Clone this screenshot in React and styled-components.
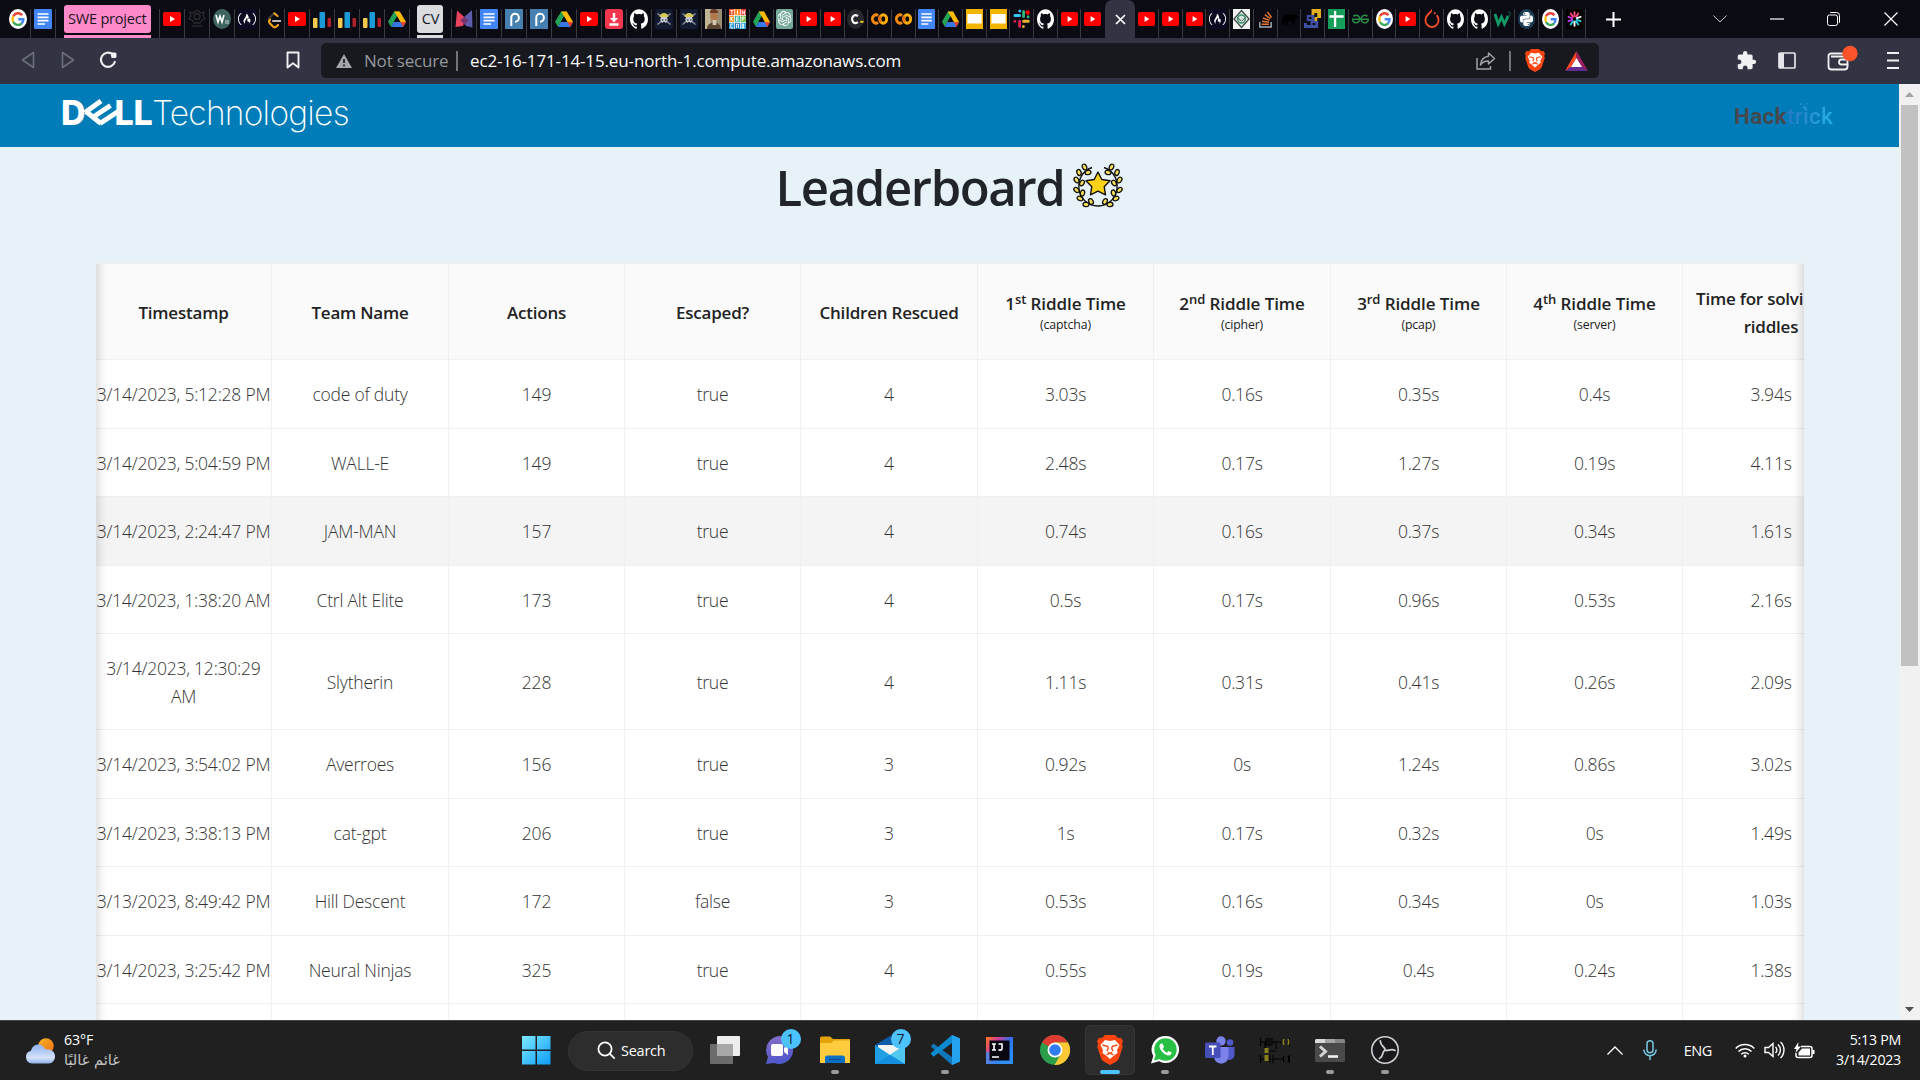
import React from "react";
import styled, { createGlobalStyle, css } from "styled-components";
import {
  SiGithub,
  SiGeeksforgeeks,
  SiPython,
  SiPytorch,
  SiOpenai,
  SiFreecodecamp,
} from "react-icons/si";
import { MdExtension } from "react-icons/md";

const Global = createGlobalStyle`
  * { box-sizing: border-box; }
  html, body { margin: 0; padding: 0; overflow: hidden; background: #e6f2f7; }
  body { font-family: "Open Sans", "Noto Sans", "DejaVu Sans", sans-serif; }
  svg { display: block; flex: none; }
`;

const Screen = styled.div`
  width: 1920px;
  height: 1080px;
  display: flex;
  flex-direction: column;
  overflow: hidden;
`;

/* ---------- browser tab strip ---------- */

const TabStrip = styled.div`
  height: 38px;
  background: #0b0b14;
  display: flex;
  padding-left: 6px;
`;

const Tab = styled.div`
  width: ${(p) => p.$w}px;
  height: 29px;
  margin-top: 9px;
  flex: none;
  border-right: 1px solid ${(p) => (p.$last ? "transparent" : "#3a3b40")};
  display: flex;
  justify-content: center;
`;

const GroupSlot = styled.div`
  width: ${(p) => p.$w}px;
  flex: none;
  height: 29px;
  margin-top: 9px;
  display: flex;
  flex-direction: column;
  align-items: center;
  border-right: 1px solid #3a3b40;
`;

const GroupChip = styled.div`
  margin-top: -4px;
  width: ${(p) => p.$w}px;
  height: 28px;
  flex: none;
  border-radius: 3px;
  background: ${(p) => p.$color};
  color: #17181f;
  font-size: 14.6px;
  letter-spacing: -0.25px;
  line-height: 27px;
  text-align: center;
  white-space: nowrap;
`;

const GroupLine = styled.div`
  margin-top: 2px;
  width: ${(p) => p.$w}px;
  height: 3px;
  flex: none;
  background: ${(p) => p.$color};
`;

const ActiveTab = styled.div`
  width: 30px;
  height: 38px;
  flex: none;
  background: #323443;
  border-radius: 7px 7px 0 0;
  display: flex;
  align-items: center;
  justify-content: center;
`;

const NewTab = styled.div`
  width: 54px;
  display: flex;
  align-items: center;
  justify-content: center;
`;

const WindowButtons = styled.div`
  margin-left: auto;
  display: flex;
`;

const WindowButton = styled.div`
  width: ${(p) => p.$w || 57}px;
  display: flex;
  align-items: center;
  justify-content: center;
`;

/* ---------- browser toolbar ---------- */

const Toolbar = styled.div`
  height: 46px;
  background: #323443;
  display: flex;
  align-items: center;
`;

const NavButtons = styled.div`
  width: 321px;
  display: flex;
  align-items: center;
  padding: 0 21px 3px 21px;

  svg:nth-child(2) { margin-left: 26px; }
  svg:nth-child(3) { margin-left: 24px; }
  svg:nth-child(4) { margin-left: auto; }
`;

const AddressBar = styled.div`
  width: 1278px;
  height: 35px;
  margin-top: -1px;
  border-radius: 5px;
  background: #17191f;
  display: flex;
  align-items: center;
  padding: 0 11px 0 15px;
  font-size: 17px;
`;

const NotSecure = styled.span`
  margin-left: 12px;
  width: 92px;
  color: #96979b;
  letter-spacing: -0.18px;
  white-space: nowrap;
`;

const Divider = styled.span`
  width: 2px;
  height: 20px;
  background: #73747a;
`;

const Url = styled.span`
  margin-left: 12px;
  color: #fbfbfb;
  white-space: nowrap;
  letter-spacing: -0.14px;
`;

const AddressActions = styled.div`
  margin-left: auto;
  display: flex;
  align-items: center;

  ${Divider} { margin: 0 14px 0 13px; }
  svg:last-child { margin-left: 20px; }
`;

const ToolbarActions = styled.div`
  flex: 1;
  display: flex;
  align-items: center;
  justify-content: flex-end;
  padding-right: 21px;
  padding-bottom: 2px;

  svg:nth-child(2) { margin-left: 21px; }
  svg:nth-child(3) { margin: -4px 0 0 31px; }
  svg:nth-child(4) { margin-left: 29px; }
`;

/* ---------- page ---------- */

const Viewport = styled.div`
  height: 936px;
  display: flex;
  overflow: hidden;
`;

const Page = styled.main`
  width: 1899px;
  height: 936px;
  background: #e6f2f7;
  display: flex;
  flex-direction: column;
  overflow: hidden;
`;

const SiteHeader = styled.header`
  height: 63px;
  flex: none;
  background: #007db8;
  display: flex;
  align-items: center;
  justify-content: space-between;
  padding: 0 65px 0 61px;
`;

const DellLogo = styled.div`
  display: flex;
  align-items: center;
  height: 63px;
  color: #fff;
  white-space: nowrap;
  font-family: Inter, "Liberation Sans", sans-serif;
`;

const DellBold = styled.span`
  font-weight: 800;
  font-size: 34px;
  line-height: 40px;
  margin-top: -6px;
  letter-spacing: ${(p) => p.$ls || "0"};
`;

const SlantedE = styled.svg`
  margin: -5px -3px 0 -3px;
`;

const Technologies = styled.span`
  font-weight: 250;
  font-size: 33.5px;
  line-height: 40px;
  margin-top: -6px;
  letter-spacing: -0.75px;
`;

const HacktrickLogo = styled.div`
  position: relative;
  font-family: Roboto, "Open Sans", sans-serif;
  font-weight: 700;
  font-size: 22.5px;
  line-height: 26px;
  letter-spacing: 0.3px;
  color: #46484d;
  display: flex;
  width: 100px;
  white-space: nowrap;
`;

const Trick = styled.span`
  font-weight: 500;
  background: linear-gradient(90deg, #2478c6, #2a8fd4 50%, #22b4e2);
  background-clip: text;
  -webkit-background-clip: text;
  color: transparent;
`;

const Sparkle = styled.svg`
  position: absolute;
  left: 66px;
  top: 0;
`;

const TitleRow = styled.div`
  height: 116px;
  flex: none;
  display: flex;
  justify-content: center;
  padding-top: 6px;
`;

const Title = styled.h1`
  margin: 0;
  font-size: 49px;
  line-height: 69px;
  font-weight: 560;
  letter-spacing: -1.35px;
  color: #212529;
  margin-right: 9px;
`;

const LaurelBox = styled.div`
  padding-top: 10px;
`;

const TableFrame = styled.section`
  position: relative;
  width: 1708px;
  flex: 1;
  margin-left: 96px;
  overflow: hidden;
  border-top: 1px solid #f0f0f0;
  background: #fff;

  &::before,
  &::after {
    content: "";
    position: absolute;
    top: 0;
    bottom: 0;
    width: 30px;
    pointer-events: none;
  }
  &::before { left: 0; box-shadow: inset 12px 0 10px -9px rgba(0, 0, 0, 0.15); }
  &::after { right: 0; box-shadow: inset -12px 0 10px -9px rgba(0, 0, 0, 0.15); }
`;

const Row = styled.div`
  display: grid;
  grid-template-columns: 176px 177px 176px 176px 177px 176px 177px 176px 176px 177px;
  height: ${(p) => p.$h}px;
  background: ${(p) => (p.$head ? "#fafafa" : p.$hover ? "#f4f4f4" : "#fff")};
`;

const Cell = styled.div`
  border-right: 1px solid #f0f0f0;
  border-bottom: 1px solid #f0f0f0;
  display: flex;
  flex-direction: column;
  align-items: center;
  justify-content: center;
  text-align: center;
  overflow: hidden;
  font-size: 17.5px;
  line-height: 27.5px;
  white-space: pre;
  padding-top: 2px;
  ${(p) =>
    p.$head
      ? css`
          font-size: 17px;
          font-weight: 540;
          color: #222;
          letter-spacing: -0.22px;
        `
      : css`
          font-weight: 300;
          color: #333;
          letter-spacing: -0.22px;
        `}
`;

const RiddleName = styled.div`
  line-height: 23px;
  letter-spacing: -0.08px;
  sup {
    font-size: 13px;
    line-height: 0;
    vertical-align: 6px;
  }
`;

const RiddleKind = styled.div`
  font-size: 12.3px;
  font-weight: 500;
  line-height: 19px;
  letter-spacing: -0.15px;
`;

const ScrollBar = styled.div`
  width: 21px;
  background: #f1f1f1;
  display: flex;
  flex-direction: column;
  align-items: center;
  justify-content: space-between;
`;

const ScrollTop = styled.div`
  display: flex;
  flex-direction: column;
  align-items: center;
`;

const ScrollArrow = styled.div`
  height: 21px;
  display: flex;
  align-items: center;
`;

const ScrollThumb = styled.div`
  width: 17px;
  height: 561px;
  background: #c1c1c1;
`;

/* ---------- taskbar ---------- */

const Taskbar = styled.footer`
  height: 60px;
  background: #202020;
  border-top: 1px solid #454545;
  display: flex;
  color: #fff;
`;

const Weather = styled.div`
  width: 508px;
  display: flex;
  align-items: center;
  padding-left: 25px;
`;

const WeatherText = styled.div`
  margin-left: 9px;
  font-size: 14.2px;
  letter-spacing: -0.1px;
  line-height: 20px;
  padding-bottom: 1px;
`;

const Condition = styled.div`
  color: #c3c3c3;
  font-family: "DejaVu Sans", sans-serif;
  font-size: 14.6px;
  letter-spacing: 0;
  white-space: nowrap;
`;

const Apps = styled.div`
  width: 904px;
  display: flex;
  align-items: center;
`;

const AppSlot = styled.div`
  width: 55px;
  height: 59px;
  flex: none;
  display: flex;
  flex-direction: column;
  align-items: center;
  padding-top: 4px;
`;

const AppTile = styled.div`
  position: relative;
  width: 50px;
  height: 50px;
  border-radius: 5px;
  background: ${(p) => (p.$active ? "#2d2d2d" : "transparent")};
  border: 1px solid ${(p) => (p.$active ? "#353535" : "transparent")};
  display: flex;
  align-items: center;
  justify-content: center;
`;

const RunMark = styled.span`
  position: absolute;
  bottom: 0;
  left: 50%;
  transform: translateX(-50%);
  width: ${(p) => (p.$active ? 20 : 8)}px;
  height: 4px;
  border-radius: 2px;
  background: ${(p) => (p.$active ? "#4cc2ff" : "#9a9a9a")};
`;

const Badge = styled.span`
  position: absolute;
  top: 3px;
  left: 25px;
  width: 20px;
  height: 20px;
  border-radius: 50%;
  background: #4cc2ff;
  color: #10202a;
  font-size: 14px;
  line-height: 20px;
  text-align: center;
`;

const SearchPill = styled.div`
  width: 125px;
  height: 40px;
  margin: 0 4px 0 5px;
  border-radius: 20px;
  background: #2d2d2d;
  border: 1px solid #353535;
  display: flex;
  align-items: center;
  padding-left: 28px;
  font-size: 14.5px;
  letter-spacing: -0.25px;
  svg { margin-right: 5px; }
`;

const Tray = styled.div`
  flex: 1;
  display: flex;
  align-items: center;
  justify-content: flex-end;
  padding-right: 19px;
`;

const TrayItem = styled.div`
  margin-right: ${(p) => p.$gap}px;
  font-size: 14.5px;
  letter-spacing: -0.4px;
  padding-bottom: 1px;
`;

const Clock = styled.div`
  font-size: 14.2px;
  line-height: 20px;
  letter-spacing: -0.25px;
  text-align: right;
  width: 66px;
  white-space: nowrap;
  padding-bottom: 2px;
`;

/* ---------- favicons (18x20 drawing area) ---------- */

const Fav = ({ children, w = 18 }) => (
  <svg width={w} height="20" viewBox="0 0 18 20" preserveAspectRatio="none">
    {children}
  </svg>
);

const favicons = {
  google: () => (
    <>
      <ellipse cx="9" cy="10" rx="9" ry="10" fill="#fff" />
      <path d="M13.2 6.2A5.6 6 0 0 0 4.2 7.2" fill="none" stroke="#ea4335" strokeWidth="2.4" />
      <path d="M4.2 7.2a6.4 6.4 0 0 0 0 5.8" fill="none" stroke="#fbbc05" strokeWidth="2.4" />
      <path d="M4.2 13a5.6 6 0 0 0 8.6 1.3" fill="none" stroke="#34a853" strokeWidth="2.4" />
      <path d="M9.2 10.2h5.2a6 6 0 0 1-1.8 4.2" fill="none" stroke="#4285f4" strokeWidth="2.4" />
    </>
  ),
  docs: () => (
    <>
      <rect width="18" height="20" rx="1" fill="#4285f4" />
      <path d="M3.5 5h11M3.5 8.3h11M3.5 11.6h11M3.5 15h7.5" stroke="#fff" strokeWidth="1.7" />
    </>
  ),
  youtube: () => (
    <>
      <rect y="3" width="18" height="14" rx="2" fill="#f00" />
      <path d="M7 7l5 3-5 3z" fill="#fff" />
    </>
  ),
  crest: () => (
    <g fill="none" stroke="#2b2b30" strokeWidth="1.3">
      <path d="M9 1l4 3 3-1-1 4 2 3-3 1-2 3H6l-2-3-3-1 2-3-1-4 3 1z" />
      <circle cx="9" cy="7.5" r="3" />
      <path d="M4 17h10" />
    </g>
  ),
  wu: () => (
    <>
      <ellipse cx="9" cy="10" rx="9" ry="10" fill="#3f6460" />
      <path d="M3 6l2 7 2-6 2 6 2-7" fill="none" stroke="#fff" strokeWidth="1.6" />
      <path d="M12 12h4M12 14h4" stroke="#c5d3d1" />
    </>
  ),
  fcc: () => (
    <>
      <rect width="18" height="20" fill="#0a0a23" />
      <svg x="0" y="1" width="18" height="18"><SiFreecodecamp size={18} color="#fff" /></svg>
    </>
  ),
  leet: () => (
    <g fill="none" strokeWidth="2.2" strokeLinecap="round" strokeLinejoin="round">
      <path d="M13 5.5L11 4 6 9.5" stroke="#3a3a3a" />
      <path d="M14.5 7L11.5 4.5M7 10.5a3 3 0 0 0 0 4l3 3a2.6 2.6 0 0 0 3.5 0l1.5-1.5" stroke="#f5a11f" />
      <path d="M10 12h8" stroke="#b9b9b9" />
    </g>
  ),
  bars: () => (
    <>
      <rect y="9" width="4.5" height="10" rx="1" fill="#f4c94c" />
      <rect x="6.5" y="3" width="5.5" height="16" rx="1" fill="#1a9ad6" />
      <rect x="14.5" y="9" width="3.5" height="9" rx="1" fill="#b3202c" />
    </>
  ),
  drive: () => (
    <>
      <path d="M6.2 2.5h5.6L5 14.7 3.2 18 0 12.8z" fill="#23a455" />
      <path d="M6.2 2.5h5.6L18 13h-5.6z" fill="#ffba00" />
      <path d="M5.9 13H18l-3 5H3.1z" fill="#3777e3" />
      <path d="M12.4 13H18l-2.9 5z" fill="#ea4335" />
      <path d="M9 7.5l3.3 5.5H5.8z" fill="#0b0b14" />
    </>
  ),
  em: () => (
    <>
      <path d="M2 1.5l9 8-3 7.5-7.5 1z" fill="#e8425f" />
      <path d="M17 1L7 10l4 7 6.5 1.5z" fill="#5c5cab" />
      <path d="M5.5 11l4-3 4 3-4 5z" fill="#743470" />
    </>
  ),
  pdash: () => (
    <>
      <rect width="18" height="20" fill="#4580b0" />
      <path d="M6.3 17V8.5A3.8 4 0 1 1 10 12.7" fill="none" stroke="#fff" strokeWidth="2" />
    </>
  ),
  download: () => (
    <>
      <rect width="18" height="20" rx="3" fill="#f2384e" />
      <path d="M9 4v7M4.5 15.5h9" stroke="#fff" strokeWidth="2.4" />
      <path d="M5 9h8l-4 4.5z" fill="#fff" />
    </>
  ),
  github: () => (
    <g transform="scale(1.125 1.25)"><SiGithub size={16} color="#fff" /></g>
  ),
  skull: () => (
    <>
      <rect width="18" height="20" rx="2" fill="#131b30" />
      <path d="M2.5 4.5l13 11M15.5 4.5l-13 11" stroke="#8f95a6" strokeWidth="1.3" />
      <circle cx="9" cy="10.5" r="3.6" fill="#c9ccd6" />
      <path d="M4.5 8a4.5 4 0 0 1 9 0z" fill="#d5c855" />
      <path d="M7 11h1.5M10 11h1.5M8 13.5h2" stroke="#131b30" strokeWidth="1.2" />
    </>
  ),
  portrait: () => (
    <>
      <rect width="18" height="20" fill="#9b8d74" />
      <path d="M0 0h6v20H0z" fill="#c2b594" />
      <ellipse cx="9.5" cy="7" rx="4" ry="5.5" fill="#b27b4e" />
      <path d="M5 4a4.5 4 0 0 1 9 0z" fill="#6d3b2a" />
      <path d="M2 20c0-8 14-9 15 0z" fill="#5d4534" />
      <path d="M8 11h4v5H8z" fill="#d3c8ad" />
    </>
  ),
  tinker: () => (
    <>
      <rect width="18" height="20" fill="#fff" />
      {[
        ["#ec4f2c", "#f58a2c", "#e8352c"],
        ["#f2a033", "#35b4a0", "#6fbd45"],
        ["#2b9bd8", "#2477bd", "#2ba4df"],
      ].map((r, j) =>
        r.map((c, i) => <rect key={`${i}${j}`} x={i * 6.2} y={j * 6.9} width="5.5" height="6.2" fill={c} />)
      )}
      <path d="M1.5 1.5h3M3 1.5v4M9 1.5v4M14 5.5v-4l2.5 4v-4M2 8v4M4 8l-2 2 2 2M8 8h2.5M8 10h2.5M8 12h2.5M8 8v4M14 12V8h2v2h-2M4.5 15H2v4h2.5M8 19v-4h2v4M14 15v4h1.5v-4z" fill="none" stroke="#fff" strokeWidth=".9" />
    </>
  ),
  gpt: () => (
    <>
      <rect width="18" height="20" rx="2" fill="#75a99c" />
      <svg x="1.5" y="2" width="16" height="16"><SiOpenai size={15} color="#fff" /></svg>
    </>
  ),
  cdot: () => (
    <>
      <ellipse cx="9" cy="10" rx="9" ry="10" fill="#26282d" />
      <path d="M11.5 7.2A3.6 4 0 1 0 11.5 13" fill="none" stroke="#fff" strokeWidth="2.2" />
      <path d="M14 12.8h3.5" stroke="#e8c61d" strokeWidth="2" />
    </>
  ),
  colab: () => (
    <g fill="none" strokeWidth="3">
      <path d="M7.5 6.5A3.8 4.2 0 1 0 7.5 13.5" stroke="#f08a0c" />
      <ellipse cx="13" cy="10" rx="3.6" ry="4.2" stroke="#f9ab00" />
      <path d="M10.2 7a4 4 0 0 0 0 6" stroke="#e8710a" />
    </g>
  ),
  slides: () => (
    <>
      <rect width="18" height="20" fill="#f4b400" />
      <rect x="1.5" y="5" width="15" height="9.5" fill="#fff" />
    </>
  ),
  slack: () => (
    <g strokeWidth="3" strokeLinecap="round">
      <path d="M2 6.5h5M7.2 2v0" stroke="#36c5f0" />
      <path d="M11.2 2.5v5M16 7.8v0" stroke="#2eb67d" />
      <path d="M11.2 12.2h5M11 17.5v0" stroke="#ecb22e" />
      <path d="M7 12.2v5M2 12.2v0" stroke="#e01e5a" />
      <circle cx="15.5" cy="3.5" r="1.6" fill="#f00" stroke="#f00" strokeWidth="1.5" />
    </g>
  ),
  diamond: () => (
    <>
      <rect width="18" height="20" fill="#f2f3f2" />
      <path d="M9 1.5l8 8.5-8 8.5L1 10z" fill="#dbe5df" stroke="#3b4a48" strokeWidth="1.3" />
      <circle cx="9" cy="10" r="4" fill="none" stroke="#3f9271" strokeWidth="1.6" />
      <path d="M5 9l4 3 4-3" fill="none" stroke="#4a5a58" />
    </>
  ),
  stack: () => (
    <>
      <path d="M3 13v5h12v-5" fill="none" stroke="#a7abb0" strokeWidth="1.5" />
      <path d="M5 15.3h7.5M5.2 12.3l7.4.9M6.2 9l7 2.4M8.2 5.7l6 4M11 3l4.5 5.5" stroke="#e8762c" strokeWidth="1.4" />
    </>
  ),
  bear: () => (
    <path d="M1 13c0-5 2-7 6-7 2-1 4 0 6 0 1-2 4-1 5 2-1 2-2 2-3 3l-1 5h-2l-1-4-3 0-1 4H5l-1-4-1 4H2z" fill="#000" />
  ),
  blocks: () => (
    <>
      <path d="M8 0h10v9h-4v5h-3V8h3V4h-3v2H8z" fill="#e3af1e" />
      <path d="M3 6h8v6h4v7H0v-5h3v2h4v-4H3z" fill="#3f51a5" />
      <path d="M5 8h3v2H5zM9 14h3v2H9z" fill="#0b0b14" />
    </>
  ),
  sheets: () => (
    <>
      <rect width="18" height="20" fill="#169d59" />
      <path d="M7.5 2v16M1.5 7.5h15" stroke="#fff" strokeWidth="2.4" />
    </>
  ),
  gfg: () => <svg x="0" y="1" width="18" height="18"><SiGeeksforgeeks size={18} color="#2b8a46" /></svg>,
  torch: () => <svg x="0" y="0" width="18" height="20"><SiPytorch size={19} color="#ee4c2c" /></svg>,
  w3: () => (
    <>
      <path d="M1 5l3.5 10L8 8l3 7L15 7" fill="none" stroke="#129a65" strokeWidth="3" />
      <path d="M15 3h2v4h-2" fill="none" stroke="#0d5a40" />
    </>
  ),
  python: () => (
    <>
      <ellipse cx="9" cy="10" rx="9" ry="10" fill="#1e3d57" />
      <svg x="2" y="3" width="14" height="14"><SiPython size={14} color="#fff" /></svg>
    </>
  ),
  burst: () => (
    <>
      <rect width="18" height="20" fill="#000" />
      {["#ff4b7d", "#ff4b7d", "#fff", "#29d3e6", "#29d3e6", "#fff", "#29d3e6", "#c23be0", "#c23be0", "#ff4b7d"].map((c, i) => (
        <path key={i} d="M9 7.3V3.2" stroke={c} strokeWidth="2" strokeLinecap="round" transform={`rotate(${i * 36} 9 10)`} />
      ))}
    </>
  ),
};

const FavTab = ({ name, w, last }) => {
  const Draw = favicons[name];
  return (
    <Tab $w={w} $last={last}>
      <Fav w={w < 24.5 ? 17 : 18}><Draw /></Fav>
    </Tab>
  );
};

const firstTabs = ["google", "docs"];
const groupATabs = ["youtube", "crest", "wu", "fcc", "leet", "youtube", "bars", "bars", "bars", "drive"];
const groupBTabs = ["em", "docs", "pdash", "pdash", "drive", "youtube", "download", "github", "skull", "skull"];
const middleTabs = ["portrait", "tinker", "drive", "gpt", "youtube", "youtube", "cdot", "colab", "colab", "docs", "drive", "slides", "slides", "slack", "github", "youtube", "youtube"];
const rightTabs = ["youtube", "youtube", "youtube", "fcc", "diamond", "stack", "bear", "blocks", "sheets", "gfg", "google", "youtube", "torch", "github", "github", "w3", "python", "google", "burst"];

/* ---------- shared marks ---------- */

const BraveLion = ({ w, h }) => (
  <svg width={w} height={h} viewBox="0 0 26 30">
    <path d="M8 0h10l3 3 3-.3 2 3.3-1 3 .7 3L22 23c-.5 1.6-1.6 2.7-3 3.7L13 30l-6-3.3C5.6 25.7 4.5 24.6 4 23L.3 12 1 9 0 6l2-3.3L5 3z" fill="#fb4510" />
    <path d="M8 5l5 1 5-1 4.5 5-2.5 5 .5 3-3.5 2.5L13 24l-4-3.5L5.500 18l.5-3-2.500-5z" fill="#fff" />
    <path d="M5.5 10l5 1.3.8 1.7-1.3 3M20.500 10l-5 1.300-.8 1.700 1.300 3M9.500 19.800l3.500-1.600 3.500 1.600" fill="none" stroke="#fb4510" strokeWidth="1.4" />
    <path d="M10.5 17l2.5 1.2 2.5-1.2" fill="none" stroke="#fb4510" strokeWidth="1" />
  </svg>
);

const Leaf = ({ x, y, r }) => (
  <ellipse cx={x} cy={y} rx="3" ry="2.1" transform={`rotate(${r} ${x} ${y})`} fill="#f7e05a" stroke="#111" strokeWidth="1.3" />
);

const LaurelSide = () => (
  <g>
    <path d="M19 4.5C9 8 5 17 6 26c1 9 8 16.5 19 17" fill="none" stroke="#111" strokeWidth="1.4" />
    <Leaf x={11.5} y={4} r={65} />
    <Leaf x={15} y={9.5} r={-10} />
    <Leaf x={6} y={9.5} r={70} />
    <Leaf x={3.5} y={17} r={55} />
    <Leaf x={9} y={20} r={-55} />
    <Leaf x={3.5} y={27} r={40} />
    <Leaf x={9.5} y={30} r={-75} />
    <Leaf x={7} y={35.5} r={20} />
    <Leaf x={13} y={41.5} r={5} />
    <Leaf x={18} y={38.5} r={60} />
  </g>
);

const Laurel = () => (
  <svg width="50" height="46" viewBox="0 0 50 46">
    <LaurelSide />
    <g transform="translate(50 0) scale(-1 1)"><LaurelSide /></g>
    <path d="M25 9l3.8 7.5 8.2 1.3-5.8 5.9 1.3 8.2L25 28.2l-7.5 3.7 1.3-8.2L13 17.8l8.2-1.3z" fill="#ffd21a" stroke="#111" strokeWidth="1.4" strokeLinejoin="round" />
  </svg>
);

/* ---------- table data ---------- */

const riddles = [
  ["1", "st", "captcha"],
  ["2", "nd", "cipher"],
  ["3", "rd", "pcap"],
  ["4", "th", "server"],
];

const rows = [
  [69, "3/14/2023, 5:12:28 PM", "code of duty", "149", "true", "4", "3.03s", "0.16s", "0.35s", "0.4s", "3.94s"],
  [68, "3/14/2023, 5:04:59 PM", "WALL-E", "149", "true", "4", "2.48s", "0.17s", "1.27s", "0.19s", "4.11s"],
  [69, "3/14/2023, 2:24:47 PM", "JAM-MAN", "157", "true", "4", "0.74s", "0.16s", "0.37s", "0.34s", "1.61s"],
  [68, "3/14/2023, 1:38:20 AM", "Ctrl Alt Elite", "173", "true", "4", "0.5s", "0.17s", "0.96s", "0.53s", "2.16s"],
  [96, "3/14/2023, 12:30:29\nAM", "Slytherin", "228", "true", "4", "1.11s", "0.31s", "0.41s", "0.26s", "2.09s"],
  [69, "3/14/2023, 3:54:02 PM", "Averroes", "156", "true", "3", "0.92s", "0s", "1.24s", "0.86s", "3.02s"],
  [68, "3/14/2023, 3:38:13 PM", "cat-gpt", "206", "true", "3", "1s", "0.17s", "0.32s", "0s", "1.49s"],
  [69, "3/13/2023, 8:49:42 PM", "Hill Descent", "172", "false", "3", "0.53s", "0.16s", "0.34s", "0s", "1.03s"],
  [68, "3/14/2023, 3:25:42 PM", "Neural Ninjas", "325", "true", "4", "0.55s", "0.19s", "0.4s", "0.24s", "1.38s"],
  [69, "", "", "", "", "", "", "", "", "", ""],
];

/* ---------- sections ---------- */

const Tabs = () => (
  <TabStrip>
    {firstTabs.map((n, i) => <FavTab key={i} name={n} w={25} />)}
    <GroupSlot $w={103.5}>
      <GroupChip $w={87} $color="#ff8ac9">SWE project</GroupChip>
      <GroupLine $w={87} $color="#ff8ac9" />
    </GroupSlot>
    {groupATabs.map((n, i) => <FavTab key={i} name={n} w={25.05} />)}
    <GroupSlot $w={42}>
      <GroupChip $w={26} $color="#dadce0">CV</GroupChip>
      <GroupLine $w={26} $color="#dadce0" />
    </GroupSlot>
    {groupBTabs.map((n, i) => <FavTab key={i} name={n} w={25.05} />)}
    {middleTabs.map((n, i) => <FavTab key={i} name={n} w={23.7} last={i === middleTabs.length - 1} />)}
    <ActiveTab>
      <svg width="11" height="11" viewBox="0 0 11 11"><path d="M1 1l9 9M10 1l-9 9" stroke="#fff" strokeWidth="1.7" /></svg>
    </ActiveTab>
    {rightTabs.map((n, i) => <FavTab key={i} name={n} w={23.75} />)}
    <NewTab>
      <svg width="15" height="15" viewBox="0 0 15 15"><path d="M7.5 0v15M0 7.5h15" stroke="#fff" strokeWidth="2" /></svg>
    </NewTab>
    <WindowButtons>
      <WindowButton>
        <svg width="14" height="8" viewBox="0 0 14 8"><path d="M.5.5L7 7 13.5.5" fill="none" stroke="#ccc" /></svg>
      </WindowButton>
      <WindowButton>
        <svg width="14" height="2"><path d="M0 1h14" stroke="#fff" strokeWidth="1.2" /></svg>
      </WindowButton>
      <WindowButton>
        <svg width="13" height="14" viewBox="0 0 13 14" fill="none" stroke="#fff">
          <rect x=".5" y="3" width="10" height="10.5" rx="2" />
          <path d="M3 1c0-.3.3-.5.7-.5h5.8a3 3 0 0 1 3 3v6.5c0 .5-.3 1-.7 1" />
        </svg>
      </WindowButton>
      <WindowButton $w={58}>
        <svg width="14" height="14" viewBox="0 0 14 14"><path d="M.5.5l13 13M13.5.5l-13 13" stroke="#fff" strokeWidth="1.2" /></svg>
      </WindowButton>
    </WindowButtons>
  </TabStrip>
);

const BrowserToolbar = () => (
  <Toolbar>
    <NavButtons>
      <svg width="14" height="18" viewBox="0 0 14 18"><path d="M12.5 1.5v15L1.5 9z" fill="none" stroke="#6c6e7a" strokeWidth="1.6" strokeLinejoin="round" /></svg>
      <svg width="14" height="18" viewBox="0 0 14 18"><path d="M1.5 1.5v15L12.5 9z" fill="none" stroke="#6c6e7a" strokeWidth="1.6" strokeLinejoin="round" /></svg>
      <svg width="19" height="18" viewBox="0 0 19 18">
        <path d="M13.5 3.2A7.1 7.1 0 1 0 15.8 11" fill="none" stroke="#f1f1f3" strokeWidth="2.2" strokeLinecap="round" />
        <path d="M11.5 1.5h4.5a1.5 1.5 0 0 1 1.5 1.5v2.5c0 1-1 1.5-2 1.5h-3z" fill="#f1f1f3" />
      </svg>
      <svg width="14" height="18" viewBox="0 0 14 18"><path d="M1.5 1.5h11v15L7 12.2 1.5 16.5z" fill="none" stroke="#f1f1f3" strokeWidth="1.9" strokeLinejoin="round" /></svg>
    </NavButtons>
    <AddressBar>
      <svg width="16" height="14" viewBox="0 0 16 14">
        <path d="M8 0l8 14H0z" fill="#a3a4a9" />
        <path d="M8 5v4M8 10.5v1.8" stroke="#17191f" strokeWidth="1.7" />
      </svg>
      <NotSecure>Not secure</NotSecure>
      <Divider />
      <Url>ec2-16-171-14-15.eu-north-1.compute.amazonaws.com</Url>
      <AddressActions>
        <svg width="20" height="18" viewBox="0 0 20 18" fill="none" stroke="#a0a1a6" strokeWidth="1.5">
          <path d="M1 6v11h13.5v-3" />
          <path d="M12.5 1l6 5.5-6 5.5V9C9 8.8 6.5 10 4.5 13 5 8 8 4.8 12.5 4.3z" strokeLinejoin="round" />
        </svg>
        <Divider />
        <BraveLion w={20} h={23} />
        <svg width="23" height="20" viewBox="0 0 23 20">
          <path d="M11.5 0L0 20l6-4 5.5-9z" fill="#ff4724" />
          <path d="M11.5 0L23 20l-6-4-5.5-9z" fill="#9e1f63" />
          <path d="M0 20h23l-6-4H6z" fill="#662d91" />
          <path d="M11.5 7l5.5 9H6z" fill="#fff" />
        </svg>
      </AddressActions>
    </AddressBar>
    <ToolbarActions>
      <MdExtension size={21} color="#f1f1f3" />
      <svg width="18" height="17" viewBox="0 0 18 17">
        <rect x="1" y="1" width="16" height="15" rx="1" fill="none" stroke="#e6e6ea" strokeWidth="1.7" />
        <rect x="1" y="1" width="5" height="15" fill="#e6e6ea" />
      </svg>
      <svg width="31" height="27" viewBox="0 0 31 27">
        <path d="M18 8.5H4a2.5 2.5 0 0 0-2.5 2.5v10.5a3 3 0 0 0 3 3h13a3 3 0 0 0 3-3v-2M20.5 14.5v-1a2 2 0 0 0-2-2H4" fill="none" stroke="#f1f1f3" strokeWidth="1.8" />
        <path d="M20.5 14.5h-6a2.5 2.5 0 0 0 0 5h6z" fill="none" stroke="#f1f1f3" strokeWidth="1.8" />
        <circle cx="23" cy="8.5" r="7.7" fill="#fb542b" />
      </svg>
      <svg width="12" height="17" viewBox="0 0 12 17"><path d="M0 1h12M0 8.5h12M0 16h12" stroke="#f1f1f3" strokeWidth="1.8" /></svg>
    </ToolbarActions>
  </Toolbar>
);

const Leaderboard = () => (
  <TableFrame>
    <Row $h={96} $head>
      {["Timestamp", "Team Name", "Actions", "Escaped?", "Children Rescued"].map((t) => (
        <Cell key={t} $head>{t}</Cell>
      ))}
      {riddles.map(([n, s, kind]) => (
        <Cell key={n} $head>
          <RiddleName>{n}<sup>{s}</sup> Riddle Time</RiddleName>
          <RiddleKind>({kind})</RiddleKind>
        </Cell>
      ))}
      <Cell $head>{"Time for solving all\nriddles"}</Cell>
    </Row>
    {rows.map(([h, ...cells], i) => (
      <Row key={i} $h={h} $hover={i === 2}>
        {cells.map((c, j) => <Cell key={j}>{c}</Cell>)}
      </Row>
    ))}
  </TableFrame>
);

const TaskbarApp = ({ children, active, running, badge }) => (
  <AppSlot>
    <AppTile $active={active}>
      {children}
      {badge && <Badge>{badge}</Badge>}
      {(running || active) && <RunMark $active={active} />}
    </AppTile>
  </AppSlot>
);

const BottomBar = () => (
  <Taskbar>
    <Weather>
      <svg width="30" height="26" viewBox="0 0 30 26">
        <defs>
          <linearGradient id="sun" x1="0" y1="0" x2="1" y2="1"><stop offset="0" stopColor="#f7b52a" /><stop offset="1" stopColor="#ef6c13" /></linearGradient>
          <linearGradient id="cloud" x1="0" y1="0" x2="0" y2="1"><stop offset="0" stopColor="#8fb2f0" /><stop offset=".7" stopColor="#d5e2fb" /><stop offset="1" stopColor="#8fb0ea" /></linearGradient>
        </defs>
        <circle cx="21" cy="8" r="7.8" fill="url(#sun)" />
        <path d="M7 25.5a6.5 6.5 0 0 1-1-12.8C7 8.5 10 6.5 13.5 6.5c3 0 5.5 1.8 6.5 4.8 6-.8 10 2.2 10 7 0 4-2.5 7.2-6.5 7.2z" fill="url(#cloud)" />
      </svg>
      <WeatherText>
        63°F
        <Condition dir="rtl">غائم غالبًا</Condition>
      </WeatherText>
    </Weather>
    <Apps>
      <TaskbarApp>
        <svg width="30" height="30" viewBox="0 0 30 30">
          <defs><linearGradient id="win" x1="0" y1="0" x2="1" y2="1"><stop offset="0" stopColor="#7ceafe" /><stop offset="1" stopColor="#0d9bfb" /></linearGradient></defs>
          <path d="M1 1h13.5v13.5H1zM16 1h13.5v13.5H16zM1 16h13.5v13.5H1zM16 16h13.5v13.5H16z" fill="url(#win)" />
        </svg>
      </TaskbarApp>
      <SearchPill>
        <svg width="19" height="19" viewBox="0 0 19 19" fill="none" stroke="#fff" strokeWidth="1.8"><circle cx="8" cy="8" r="6.6" /><path d="M12.7 12.7l5 5" /></svg>
        Search
      </SearchPill>
      <TaskbarApp>
        <svg width="30" height="28" viewBox="0 0 30 28">
          <rect x="7" y="0" width="23" height="20" rx="1" fill="#ededed" />
          <rect x="0" y="8" width="23" height="20" rx="1" fill="#808080" fillOpacity=".8" />
          <rect x="7" y="8" width="16" height="12" fill="#a8a8a8" />
        </svg>
      </TaskbarApp>
      <TaskbarApp badge="1">
        <svg width="30" height="30" viewBox="0 0 30 30">
          <defs><linearGradient id="chat" x1="0" y1="0" x2=".3" y2="1"><stop offset="0" stopColor="#8b6fc9" /><stop offset="1" stopColor="#5059c9" /></linearGradient></defs>
          <path d="M15 1a14 14 0 1 1-6 27l-8 1 2-7A14 14 0 0 1 15 1z" fill="url(#chat)" />
          <rect x="6" y="9" width="12" height="12" rx="2" fill="#fff" />
          <path d="M19 13l4-3v10l-4-3z" fill="#fff" />
        </svg>
      </TaskbarApp>
      <TaskbarApp running>
        <svg width="30" height="28" viewBox="0 0 30 28">
          <path d="M0 2a1.5 1.5 0 0 1 1.5-1.5H10L13 3h17v8H0z" fill="#e3a20a" />
          <path d="M0 7h11l3-2.5h16V27H0z" fill="#ffcb3f" />
          <path d="M5 27v-5a2.5 2.5 0 0 1 2.5-2.5h15A2.5 2.5 0 0 1 25 22v5z" fill="#0c70c4" />
          <path d="M9 23.5h12" stroke="#0a4f94" strokeWidth="1.3" />
        </svg>
      </TaskbarApp>
      <TaskbarApp badge="7">
        <svg width="30" height="28" viewBox="0 0 30 28">
          <path d="M0 9L15 0l15 9v3H0z" fill="#0a5aa8" />
          <path d="M3 9h24v10H3z" fill="#f3f3f3" />
          <path d="M0 9l15 10L30 9v19H0z" fill="#1fa0e4" />
          <path d="M30 9v19L12 17l3 2z" fill="#50c8f0" />
          <path d="M0 28l15-9 15 9z" fill="#1490df" />
        </svg>
      </TaskbarApp>
      <TaskbarApp running>
        <svg width="30" height="30" viewBox="0 0 30 30">
          <path d="M22 0l8 3.5v23L22 30 .8 11.5 3.5 8.5 22 22z" fill="#1177bb" />
          <path d="M22 0v8L3.5 21.8.5 18.5z" fill="#0b8ad0" />
          <path d="M22 0l8 3.5v23L22 30z" fill="#25a2ee" />
        </svg>
      </TaskbarApp>
      <TaskbarApp>
        <svg width="27" height="27" viewBox="0 0 27 27">
          <defs><linearGradient id="ij" x1="0" y1="0" x2="1" y2=".6"><stop offset="0" stopColor="#ff7a1f" /><stop offset=".35" stopColor="#d23c94" /><stop offset=".7" stopColor="#2f6fe8" /><stop offset="1" stopColor="#2b8cf5" /></linearGradient></defs>
          <rect width="27" height="27" fill="url(#ij)" />
          <path d="M0 14v13h27z" fill="#3593f1" fillOpacity=".75" />
          <rect x="3.5" y="3.5" width="20" height="20" fill="#0a0710" />
          <path d="M6 7h4M8 7v6M6 13h4M12.5 7H16v4.5c0 2-2.5 2-3.5 1M6 20h7" fill="none" stroke="#fff" strokeWidth="1.6" />
        </svg>
      </TaskbarApp>
      <TaskbarApp>
        <svg width="30" height="30" viewBox="0 0 30 30">
          <circle cx="15" cy="15" r="15" fill="#2b9e4c" />
          <path d="M15 15L2 7.5A15 15 0 0 1 28 7.5H15z" fill="#e03b30" />
          <path d="M28 7.5A15 15 0 0 1 14.5 30L21.5 18 15 7.5z" fill="#fcc934" />
          <circle cx="15" cy="15" r="7.5" fill="#fff" />
          <circle cx="15" cy="15" r="5.8" fill="#317cf0" />
        </svg>
      </TaskbarApp>
      <TaskbarApp active><BraveLion w={26} h={30} /></TaskbarApp>
      <TaskbarApp running>
        <svg width="28" height="28" viewBox="0 0 28 28">
          <path d="M14.5 0a13.5 13.5 0 1 1-6.5 25.3L0 27.5l2.3-7.5A13.5 13.5 0 0 1 14.5 0z" fill="#fff" />
          <circle cx="14.5" cy="13.5" r="11.2" fill="#27c045" />
          <path d="M3 24.5l1.7-6L8.8 23z" fill="#27c045" />
          <path d="M10 7.5c-2 1-2 3.5-.3 6.3 2 3.2 5 5.5 7.8 5.7 2 0 3.3-1.5 3.2-3L17.5 15l-1.5 1.7c-2-.9-3.3-2.2-4.3-4L13 11l-1.5-3.4z" fill="#fff" />
        </svg>
      </TaskbarApp>
      <TaskbarApp>
        <svg width="30" height="28" viewBox="0 0 30 28">
          <circle cx="25" cy="6.5" r="3.3" fill="#5059c9" />
          <path d="M20 11h9.5v7c0 4-2.5 6-6.5 6z" fill="#5059c9" />
          <circle cx="16" cy="5" r="4.7" fill="#7b83eb" />
          <path d="M9 11h14.5v9c0 10-14.5 10-14.5 0z" fill="#7b83eb" />
          <rect x="0" y="6.5" width="15.5" height="15.5" rx="1.5" fill="#464eb8" />
          <path d="M4 10.5h7.5M7.8 10.5v8.5" stroke="#fff" strokeWidth="1.8" />
        </svg>
      </TaskbarApp>
      <TaskbarApp>
        <svg width="30" height="26" viewBox="0 0 30 26" fill="none" strokeWidth="1.1">
          <path d="M.5 1v8M0 5h5M6 1v8M8 1v8M10 1v8M12 1v8M12 5h4M16 12V5h7M29.5 1v8M.5 18v8M0 22h5M10 18v8M13 18v8M13 22h10M29.5 18v8M5 5v9h11" stroke="#000" />
          <path d="M24 2q-1.5 3 0 6M28 2q1.5 3 0 6" stroke="#8a8420" strokeWidth="1.5" />
          <path d="M24 19q-1.5 3 0 6M28 19q1.5 3 0 6" stroke="#000" strokeWidth="1.3" />
          <path d="M4.5 11h4v5h-4zM4.5 18h4v6h-4z" fill="#85801c" />
        </svg>
      </TaskbarApp>
      <TaskbarApp running>
        <svg width="30" height="23" viewBox="0 0 30 23">
          <rect width="30" height="23" rx="1.5" fill="#4a4a4a" />
          <path d="M0 4V1.5A1.5 1.5 0 0 1 1.5 0H10v4z" fill="#d9d9d9" />
          <path d="M10 0h10v4H10z" fill="#a5a5a5" />
          <path d="M20 0h8.5A1.5 1.5 0 0 1 30 1.5V4H20z" fill="#858585" />
          <path d="M5 7.5l5.5 5L5 17.5" fill="none" stroke="#d5d5d5" strokeWidth="3" />
          <path d="M13 17.5h10" stroke="#f1f1f1" strokeWidth="2.6" />
        </svg>
      </TaskbarApp>
      <TaskbarApp running>
        <svg width="28" height="28" viewBox="0 0 28 28" fill="none" stroke="#cfcfcf">
          <circle cx="14" cy="14" r="13.2" fill="#1a181c" strokeWidth="1.6" />
          {[0, 120, 240].map((a) => (
            <path key={a} d="M14 14C14.3 10.5 9.5 10.5 9.3 5" strokeWidth="1.8" strokeLinecap="round" transform={`rotate(${a} 14 14)`} />
          ))}
        </svg>
      </TaskbarApp>
    </Apps>
    <Tray>
      <TrayItem $gap={20}>
        <svg width="16" height="9" viewBox="0 0 16 9"><path d="M.5 8.5L8 1l7.5 7.5" fill="none" stroke="#fff" strokeWidth="1.3" /></svg>
      </TrayItem>
      <TrayItem $gap={27}>
        <svg width="14" height="20" viewBox="0 0 14 20" fill="none" stroke="#76c8e3" strokeWidth="1.5">
          <rect x="4" y=".8" width="6" height="12" rx="3" />
          <path d="M.8 9.5a6.2 6.2 0 0 0 12.4 0M7 15.7V20" />
        </svg>
      </TrayItem>
      <TrayItem $gap={23}>ENG</TrayItem>
      <TrayItem $gap={9}>
        <svg width="20" height="15" viewBox="0 0 20 15" fill="none" stroke="#fff" strokeWidth="1.5">
          <path d="M.7 5.5a13 13 0 0 1 18.6 0M3.5 8.5a9 9 0 0 1 13 0M6.2 11.3a5.3 5.3 0 0 1 7.6 0" />
          <circle cx="10" cy="13" r="1.5" fill="#fff" stroke="none" />
        </svg>
      </TrayItem>
      <TrayItem $gap={9}>
        <svg width="21" height="18" viewBox="0 0 21 18" fill="none" stroke="#fff" strokeWidth="1.4">
          <path d="M1 6.5v5h3.5L9 15.5v-13L4.5 6.5zM11.5 6a4 4 0 0 1 0 6M14 3.5a7.5 7.5 0 0 1 0 11M16.5 1a11 11 0 0 1 0 16" />
        </svg>
      </TrayItem>
      <TrayItem $gap={20}>
        <svg width="21" height="17" viewBox="0 0 21 17">
          <path d="M7 4.5h9a2 2 0 0 1 2 2v7a2 2 0 0 1-2 2H4a2 2 0 0 1-2-2V11" fill="none" stroke="#fff" strokeWidth="1.5" />
          <path d="M8 6.5h8v7H4.5v-3zM18.5 8h2v4h-2z" fill="#fff" />
          <path d="M4.5 0L0 7h2.5L1.5 11 7 4.5H4z" fill="#fff" />
        </svg>
      </TrayItem>
      <Clock>5:13 PM<br />3/14/2023</Clock>
    </Tray>
  </Taskbar>
);

export default function App() {
  return (
    <Screen>
      <Global />
      <Tabs />
      <BrowserToolbar />
      <Viewport>
        <Page>
          <SiteHeader>
            <DellLogo>
              <DellBold>D</DellBold>
              <SlantedE width="35" height="30" viewBox="0 0 35 30">
                <path d="M2 14.5L18 3M9.5 19.5L27.5 7.5M17 25.500L35 13.500M3 13.500L18 25.500" fill="none" stroke="#fff" strokeWidth="5" />
              </SlantedE>
              <DellBold $ls="-0.4px">LL</DellBold>
              <Technologies>Technologies</Technologies>
            </DellLogo>
            <HacktrickLogo>
              Hack<Trick>trick</Trick>
              <Sparkle width="8" height="8" viewBox="0 0 8 8">
                <path d="M4.5 2v5M2 4.5h5M1 0v2M0 1h2M7.5 0v1.5" stroke="#2c9bdc" strokeWidth=".8" />
              </Sparkle>
            </HacktrickLogo>
          </SiteHeader>
          <TitleRow>
            <Title>Leaderboard</Title>
            <LaurelBox><Laurel /></LaurelBox>
          </TitleRow>
          <Leaderboard />
        </Page>
        <ScrollBar>
          <ScrollTop>
            <ScrollArrow>
              <svg width="9" height="5" viewBox="0 0 9 5"><path d="M0 5L4.5 0 9 5z" fill="#a3a3a3" /></svg>
            </ScrollArrow>
            <ScrollThumb />
          </ScrollTop>
          <ScrollArrow>
            <svg width="9" height="5" viewBox="0 0 9 5"><path d="M0 0l4.5 5L9 0z" fill="#505050" /></svg>
          </ScrollArrow>
        </ScrollBar>
      </Viewport>
      <BottomBar />
    </Screen>
  );
}
